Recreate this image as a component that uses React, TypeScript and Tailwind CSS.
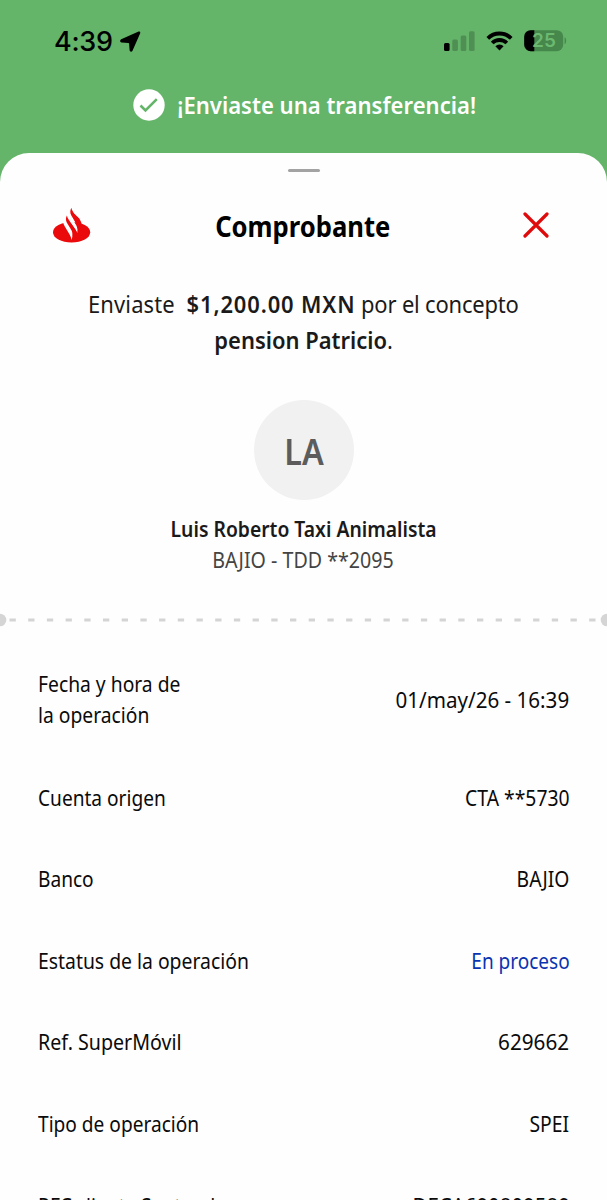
import type { ReactNode } from "react";

function StatusBar() {
  return (
    <div className="flex h-[82px] items-center justify-between pl-[54px] pr-[40px]">
      <div className="flex items-center gap-[7px]">
        <span className="w-[59px] whitespace-nowrap font-['Inter',sans-serif] text-[27px] font-medium leading-none tracking-[-0.3px] text-black">
          4:39
        </span>
        <svg width="21" height="21" viewBox="0 0 21 21" fill="#000">
          <path d="M18.6.6 1.2 8.3c-1.6.8-1.3 3 .4 3.1l6.7.5c.5 0 .8.3.8.8l.5 6.600c.1 1.700 2.200 2 2.900.4l7.600-17.300C20.600.9 19.900.1 18.600.6Z" />
        </svg>
      </div>
      <div className="flex items-center">
        <svg width="31" height="20" viewBox="0 0 31 20">
          <rect x="0" y="12" width="5.6" height="8" rx="1.5" fill="#000" />
          <g fill="#000" opacity="0.2">
            <rect x="8.3" y="8.6" width="5.6" height="11.4" rx="1.5" />
            <rect x="16.7" y="4.4" width="5.6" height="15.6" rx="1.5" />
            <rect x="25" y="0.3" width="5.6" height="19.7" rx="1.5" />
          </g>
        </svg>
        <svg className="ml-[11px]" width="27" height="20" viewBox="0 0 27 20" fill="none">
          <g stroke="#000" strokeWidth="3.8">
            <path d="M1.8 7.3a16.6 16.6 0 0 1 23.4 0" />
            <path d="M6.2 12a10.4 10.4 0 0 1 14.6 0" />
          </g>
          <path d="M9.4 15.2a5.8 5.8 0 0 1 8.2 0L13.5 19.4Z" fill="#000" />
        </svg>
        <svg className="ml-[11px]" width="43" height="22" viewBox="0 0 43 22">
          <rect x="0.2" y="0.2" width="39" height="21" rx="6.5" fill="#46874b" />
          <path d="M10.3.2H6.7A6.5 6.5 0 0 0 .2 6.7v8a6.5 6.5 0 0 0 6.5 6.5h3.6Z" fill="#000" />
          <path d="M40.6 7.2c2 .8 2 6.2 0 7Z" fill="#46874b" />
          <text x="20" y="17.3" textAnchor="middle" fontFamily="Inter, sans-serif" fontWeight="600" fontSize="19" fill="#6cb972">
            25
          </text>
        </svg>
      </div>
    </div>
  );
}

function Banner() {
  return (
    <div className="flex h-[45px] items-center justify-center gap-[13px] pl-[1px]">
      <svg width="32" height="32" viewBox="0 0 32 32" fill="none">
        <circle cx="16" cy="16" r="15.7" fill="#fff" />
        <path d="m7.5 16.5 5 5L23.8 10.2" stroke="#64b469" strokeWidth="2.6" />
      </svg>
      <span className="flex w-[298px] justify-center whitespace-nowrap pt-px text-[23px] font-semibold text-white">
        <span className="scale-x-[0.96]">¡Enviaste una transferencia!</span>
      </span>
    </div>
  );
}

function Flame() {
  return (
    <svg width="38" height="36" viewBox="0 0 38 36">
      <ellipse cx="18.6" cy="25.2" rx="18.6" ry="10.3" fill="#ea0a0c" />
      <path d="M9.5 13.5H14L18.8 22.8Q20.4 26.5 18.6 33Q17.9 29.8 16.6 27.6L11.8 19.6Q10.1 16.6 10.3 15.5Z" fill="#fefefe" />
      <path d="M14.500 12H19.500L23.500 18.700Q25.200 22 24.300 26Q23.500 24.500 22.300 22.800Z" fill="#fefefe" />
      <path d="M18.300.8C16.900 3.800 17 6.200 18.200 8.300L23.600 17.600Q25 20.200 24.900 22.500L29 19C28.600 15.700 27.600 13.700 26.300 11.500L20.600 5.900Q18.700 3.300 18.300.8Z" fill="#ea0a0c" stroke="none" />
      <path d="M18.300.8Q18.700 3.300 20.600 6.300L26 15.200 28 20 22 14Z" fill="#ea0a0c" />
      <path d="M13.9 8.5C12.5 11.3 12.7 13.6 13.9 15.7L18.6 23.6Q20 26 19.8 29L24.2 26.3Q23.8 24.8 22.5 22.6L16.1 13.3Q14.3 10.7 13.9 8.5Z" fill="#ea0a0c" />
    </svg>
  );
}

type RowProps = {
  label: ReactNode;
  value: string;
  labelFit?: string;
  valueFit?: string;
  height?: string;
};

function Row({
  label,
  value,
  labelFit = "scale-x-[0.91]",
  valueFit = "scale-x-[0.92]",
  height = "h-[81.6px]",
}: RowProps) {
  return (
    <div
      className={`flex shrink-0 items-center justify-between whitespace-nowrap px-[37.5px] text-[21px] leading-[31px] text-[#0b0b0b] ${height}`}
    >
      <span className={`origin-left ${labelFit}`}>{label}</span>
      <span className={`origin-right ${valueFit}`}>{value}</span>
    </div>
  );
}

export default function App() {
  return (
    <div className="flex h-[1200px] w-[607px] flex-col overflow-hidden bg-[#64b469] font-['Noto_Sans',sans-serif]">
      <StatusBar />
      <Banner />
      <main className="mt-[26px] flex min-h-0 flex-1 flex-col overflow-hidden rounded-t-[29px] bg-[#fefefe]">
        <div className="mt-[16px] h-[3px] w-[32px] shrink-0 self-center rounded-full bg-[#a3a3a3]" />
        <header className="mt-[33px] flex h-[40px] shrink-0 items-center justify-between pl-[53px] pr-[58px]">
          <Flame />
          <h1 className="w-[200px] whitespace-nowrap pr-[9px] pt-[2px] text-center text-[28px] font-bold leading-[40px] text-black">
            <span className="inline-block scale-x-[0.915]">Comprobante</span>
          </h1>
          <svg width="26" height="26" viewBox="0 0 26 26" fill="none" stroke="#df0a0c" strokeWidth="3.2" strokeLinecap="round">
            <path d="M2 2 24 24M24 2 2 24" />
          </svg>
        </header>
        <p className="mt-[41px] flex shrink-0 flex-col items-center whitespace-pre text-[24px] leading-[36px] text-[#1a1a1a]">
          <span className="scale-x-[0.915]">
            <span className="tracking-[0.15px]">Enviaste{"  "}</span>
            <b className="font-semibold tracking-[0.95px]">$1,200.00 MXN</b>
            <span className="tracking-[-0.2px]"> por el concepto</span>
          </span>
          <span className="scale-x-[0.915]">
            <b className="font-semibold">pension Patricio</b>.
          </span>
        </p>
        <div className="mt-[42px] flex size-[100px] shrink-0 items-center justify-center self-center rounded-full bg-[#f1f1f1] text-[36px] font-semibold text-[#5c5c5c]">
          <span className="scale-x-[0.9] pt-[4px]">LA</span>
        </div>
        <div className="mt-[14px] flex shrink-0 flex-col items-center whitespace-nowrap text-[21px] leading-[31px]">
          <span className="scale-x-[0.92] font-semibold text-[#1a1a1a]">Luis Roberto Taxi Animalista</span>
          <span className="scale-x-[0.935] text-[#444]">BAJIO - TDD **2095</span>
        </div>
        <svg className="mt-[37px] shrink-0" width="607" height="14" viewBox="0 0 607 14">
          <circle cx="0" cy="7" r="6.3" fill="#d5d5d5" />
          <circle cx="607" cy="7" r="6.3" fill="#d5d5d5" />
          <path d="M9.5 7H596" stroke="#d4d4d4" strokeWidth="3" strokeDasharray="6.3 12.4" />
        </svg>
        <section className="mt-[16px] flex flex-col">
          <Row
            height="h-[114.3px]"
            label={
              <>
                Fecha y hora de
                <br />
                la operación
              </>
            }
            labelFit="scale-x-[0.918]"
            value="01/may/26 - 16:39"
            valueFit="scale-x-[0.98]"
          />
          <Row label="Cuenta origen" value="CTA **5730" />
          <Row label="Banco" value="BAJIO" />
          <Row
            label="Estatus de la operación"
            labelFit="scale-x-[0.922]"
            value="En proceso"
            valueFit="scale-x-[0.905] text-[#0a33b0]"
          />
          <Row label="Ref. SuperMóvil" labelFit="scale-x-[0.935]" value="629662" valueFit="scale-x-[0.985]" />
          <Row label="Tipo de operación" value="SPEI" />
          <Row label="RFC cliente Santander" value="DECA690809589" valueFit="scale-x-[0.972]" />
        </section>
      </main>
    </div>
  );
}
